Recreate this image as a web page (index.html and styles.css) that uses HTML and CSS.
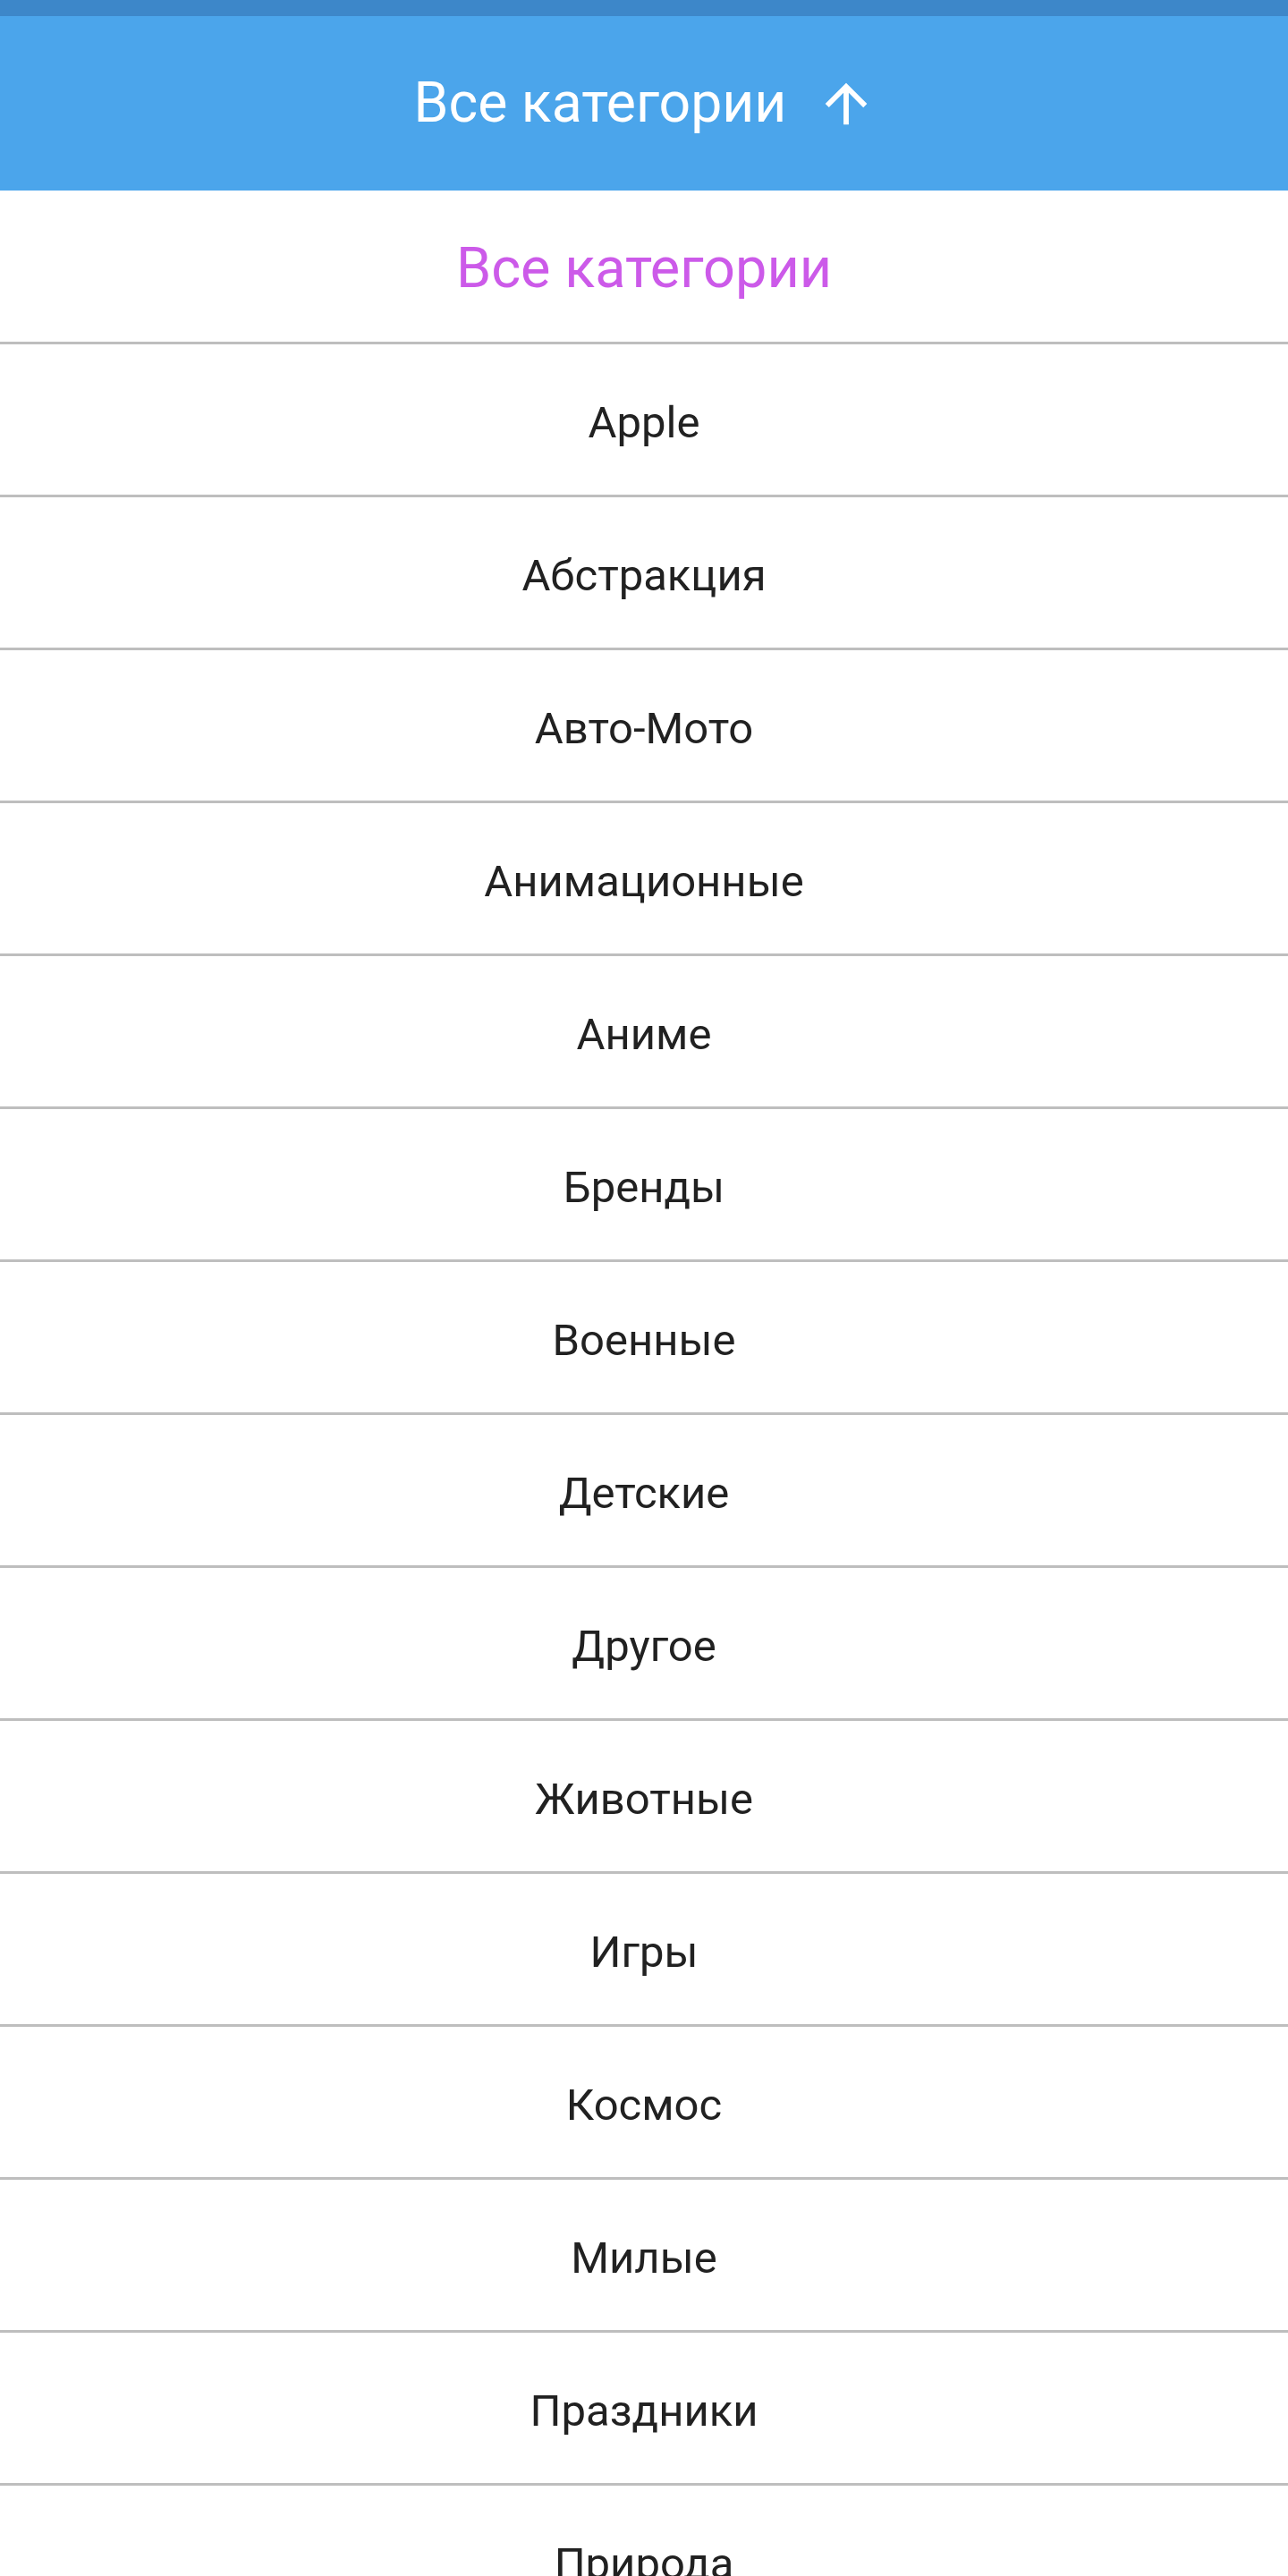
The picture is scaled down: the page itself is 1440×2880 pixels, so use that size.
FILE: index.html
```html
<!DOCTYPE html>
<html lang="ru">
<head>
<meta charset="utf-8">
<title>Все категории</title>
<link rel="stylesheet" href="styles.css">
</head>
<body>
<div class="status-bar"></div>
<header class="app-bar">
  <span class="app-bar-title">Все категории</span>
  <svg class="app-bar-icon" viewBox="0 0 24 24" aria-hidden="true"><path d="M4 12l1.41 1.41L11 7.83V20h2V7.83l5.58 5.59L20 12l-8-8-8 8z"/></svg>
</header>
<ul class="category-list">
  <li class="category category-active">Все категории</li>
  <li class="category">Apple</li>
  <li class="category">Абстракция</li>
  <li class="category">Авто-Мото</li>
  <li class="category">Анимационные</li>
  <li class="category">Аниме</li>
  <li class="category">Бренды</li>
  <li class="category">Военные</li>
  <li class="category">Детские</li>
  <li class="category">Другое</li>
  <li class="category">Животные</li>
  <li class="category">Игры</li>
  <li class="category">Космос</li>
  <li class="category">Милые</li>
  <li class="category">Праздники</li>
  <li class="category">Природа</li>
</ul>
</body>
</html>
```
FILE: styles.css
```css
html, body {
  margin: 0;
  padding: 0;
  background: #ffffff;
}
body {
  font-family: Roboto, "Noto Sans", sans-serif;
  width: 1440px;
}
.status-bar {
  height: 18px;
  background: #3d87c9;
}
.app-bar {
  height: 195px;
  background: #4ba5eb;
  display: flex;
  align-items: center;
  justify-content: center;
  gap: 32px;
  color: #ffffff;
}
.app-bar-title {
  font-size: 62.5px;
  line-height: 1;
  font-weight: 400;
  padding-left: 4px;
}
.app-bar-icon {
  width: 70px;
  height: 70px;
  fill: #ffffff;
  flex: none;
}
.category-list {
  list-style: none;
  margin: 0;
  padding: 0;
}
.category {
  box-sizing: border-box;
  height: 171px;
  padding-top: 6px;
  display: flex;
  align-items: center;
  justify-content: center;
  border-top: 3px solid #bebebe;
  font-size: 49px;
  color: #212121;
}
.category-active {
  height: 169px;
  padding-top: 4px;
  border-top: none;
  font-size: 63px;
  color: #cc5ae9;
}
```
